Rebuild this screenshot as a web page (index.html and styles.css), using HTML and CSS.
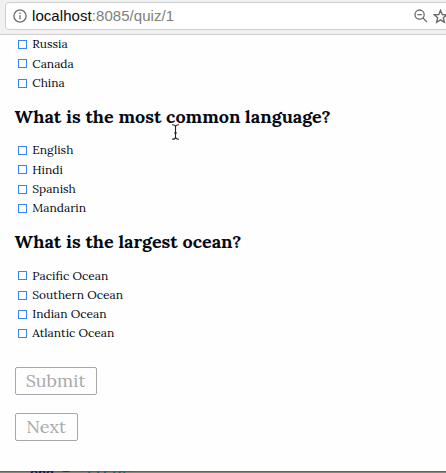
FILE: index.html
```html
<!DOCTYPE html>
<html lang="en">
<head>
<meta charset="utf-8">
<title>Quiz</title>
<link rel="stylesheet" href="styles.css">
</head>
<body>
<header class="toolbar">
  <div class="address">
    <svg class="info" viewBox="0 0 14 14"><circle cx="7" cy="7" r="6.1"/><path d="M7 6.2v4M7 3.5v1.5"/></svg>
    <span class="url"><b>localhost</b>:8085/quiz/1</span>
    <svg class="lens" viewBox="0 0 14 14"><circle cx="5.6" cy="5.6" r="4.6"/><path d="M3.4 5.6h4.4M9 9l4 4"/></svg>
    <svg class="star" viewBox="0 0 14 14"><path d="M7 1.2l1.6 3.9 4.3.3-3.3 2.8 1 4.2L7 10.1l-3.6 2.3 1-4.2L1.1 5.4l4.3-.3z"/></svg>
  </div>
</header>
<main class="quiz">
  <ul class="options">
    <li><i class="box"></i><span>Russia</span></li>
    <li><i class="box"></i><span>Canada</span></li>
    <li><i class="box"></i><span>China</span></li>
  </ul>
  <h2>What is the most common language?</h2>
  <ul class="options">
    <li><i class="box"></i><span>English</span></li>
    <li><i class="box"></i><span>Hindi</span></li>
    <li><i class="box"></i><span>Spanish</span></li>
    <li><i class="box"></i><span>Mandarin</span></li>
  </ul>
  <h2>What is the largest ocean?</h2>
  <ul class="options">
    <li><i class="box"></i><span>Pacific Ocean</span></li>
    <li><i class="box"></i><span>Southern Ocean</span></li>
    <li><i class="box"></i><span>Indian Ocean</span></li>
    <li><i class="box"></i><span>Atlantic Ocean</span></li>
  </ul>
  <button class="submit">Submit</button>
  <button class="next">Next</button>
</main>
<footer class="editor"><span class="kw">end</span> = <span class="str">'title'</span> ..</footer>
<svg class="cursor" viewBox="0 0 9 16"><path d="M1 .7c2 0 3.500.5 3.500 2v10.500c0 1.500-1.500 2-3.500 2M8 .7c-2 0-3.500.5-3.500 2M8 15.200c-2 0-3.500-.5-3.500-2M3 9h3"/></svg>
</body>
</html>
```
FILE: styles.css
```css
* { box-sizing: border-box; }
body {
  margin: 0;
  height: 473px;
  overflow: hidden;
  display: flex;
  flex-direction: column;
  background: #fefefe;
  color: #040814;
  font-family: Lora, "Liberation Serif", serif;
}
.toolbar {
  flex: none;
  height: 35px;
  padding: 2px 0 0 5px;
  background: #f1f1f1;
  border-bottom: 1px solid #cecece;
  overflow: hidden;
}
.address {
  width: 460px;
  height: 28px;
  display: flex;
  align-items: center;
  padding-left: 7px;
  background: #fff;
  border: 1px solid #cdcfcd;
  border-radius: 4px;
}
.address svg { flex: none; fill: none; stroke: #6b6b6b; stroke-width: 1.3; }
.info { width: 14px; height: 14px; }
.url {
  width: 382px;
  margin-left: 5px;
  font: 15px/26px "Liberation Sans", sans-serif;
  letter-spacing: 0.06px;
  color: #80807c;
  white-space: nowrap;
}
.url b { font-weight: 400; color: #080808; }
.lens { width: 14px; height: 14px; }
.star { width: 15px; height: 15px; margin-left: 5px; }
.quiz {
  flex: none;
  height: 436px;
  padding: 0 14.6px;
  display: flex;
  flex-direction: column;
  align-items: flex-start;
}
.options { flex: none; list-style: none; margin: 0; padding: 0 0 0 3.4px; }
.options li {
  height: 19.3px;
  display: flex;
  align-items: center;
  gap: 5.300px;
  font-size: 12px;
  line-height: 19px;
  white-space: nowrap;
}
.options span { margin-bottom: 1.4px; }
.box { width: 9px; height: 9px; border: 1px solid #3984f5; }
h2 {
  flex: none;
  height: 24px;
  margin: 12px 0;
  font-size: 18px;
  line-height: 24px;
  font-weight: 700;
  white-space: nowrap;
}
button {
  flex: none;
  height: 28px;
  padding: 0;
  background: transparent;
  border: 1px solid #a8a8aa;
  border-radius: 2px;
  color: #a8a8aa;
  font-family: inherit;
  font-size: 18px;
  line-height: 24px;
}
.submit { width: 82px; margin-top: 24px; }
.next { width: 63px; margin-top: 18px; }
.editor {
  flex: none;
  height: 2px;
  padding-left: 30px;
  overflow: hidden;
  background: linear-gradient(#62625e 50%, #86867e 50%);
  color: #111;
  font: bold 13.3px/6px "Liberation Mono", monospace;
  white-space: pre;
}
.kw { color: #10107c; }
.str { color: #087070; }
.cursor {
  position: absolute;
  left: 171px;
  top: 124px;
  width: 9px;
  height: 16px;
  fill: none;
  stroke: #222;
  stroke-width: 1.1px;
}
```
